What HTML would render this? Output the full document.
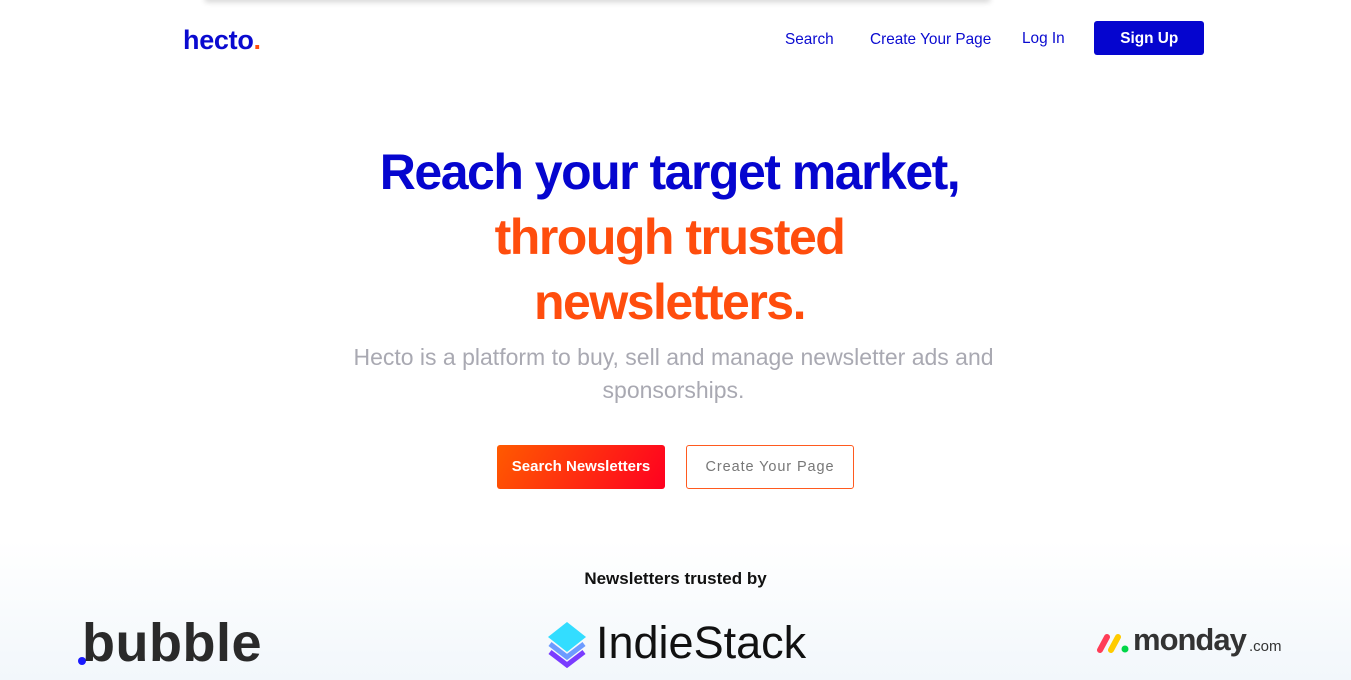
<!DOCTYPE html>
<html><head><meta charset="utf-8">
<style>
*{margin:0;padding:0;box-sizing:border-box}
html,body{width:1351px;height:680px;overflow:hidden;background:#fff;font-family:"Liberation Sans",sans-serif}
.sq{display:inline-block;transform:scaleX(.96);transform-origin:center}
.topshadow{position:absolute;left:205px;top:-6px;width:785px;height:6px;box-shadow:0 2px 6px rgba(0,0,0,.18);background:#fff}
.logo{position:absolute;left:183px;top:25px;font-size:27px;font-weight:bold;color:#0a0ad0;letter-spacing:-0.3px}
.logo span{color:#ff4d0d}
.nav{position:absolute;top:31px;font-size:16px;color:#0a0ad0;white-space:nowrap}
.signup{position:absolute;left:1094px;top:21px;width:110px;height:34px;background:#0505cf;border-radius:3px;color:#fff;font-weight:bold;font-size:16px;text-align:center;line-height:36px}
h1{position:absolute;left:-6px;width:1351px;text-align:center;font-size:50px;font-weight:900;letter-spacing:-1.5px;white-space:nowrap}
.sub{position:absolute;left:-2px;width:1351px;text-align:center;font-size:23px;color:#a9a9b2;line-height:33px;top:341px}
.b1{position:absolute;left:497px;top:445px;width:168px;height:44px;border-radius:3px;background:linear-gradient(120deg,#ff5a00,#ff0020);color:#fff;font-weight:bold;font-size:15px;text-align:center;line-height:44px}
.b2{position:absolute;left:686px;top:445px;width:168px;height:44px;border-radius:3px;border:1px solid #ff5a1f;color:#777;font-size:14.5px;text-align:center;line-height:42px;letter-spacing:.9px}
.bottom{position:absolute;left:0;top:540px;width:1351px;height:140px;background:linear-gradient(#fff,#f2f7fb)}
.trusted{position:absolute;left:0;width:1351px;top:569px;text-align:center;font-weight:bold;font-size:17px;color:#111}
</style></head><body>
<div class="topshadow"></div>
<div class="logo">hecto<span>.</span></div>
<div class="nav" style="left:785px"><span class="sq" style="transform-origin:left">Search</span></div>
<div class="nav" style="left:870px"><span class="sq" style="transform-origin:left">Create Your Page</span></div>
<div class="nav" style="left:1022px;top:30px"><span class="sq" style="transform-origin:left">Log In</span></div>
<div class="signup"><span class="sq">Sign Up</span></div>
<h1 style="top:143px;color:#0505cf">Reach your target market,</h1>
<h1 style="top:208px;color:#ff4d0d">through trusted</h1>
<h1 style="top:273px;color:#ff4d0d">newsletters.</h1>
<div class="sub">Hecto is a platform to buy, sell and manage newsletter ads and<br>sponsorships.</div>
<div class="b1">Search Newsletters</div>
<div class="b2">Create Your Page</div>
<div class="bottom"></div>
<div class="trusted">Newsletters trusted by</div>
<div style="position:absolute;left:78px;top:657px;width:8px;height:8px;border-radius:50%;background:#1a1aff"></div>
<div style="position:absolute;left:82px;top:612px;font-size:54px;color:#2a2a2a;letter-spacing:0.5px;font-weight:bold">bubble</div>
<svg style="position:absolute;left:546px;top:622px" width="42" height="46" viewBox="0 0 42 46">
<polygon points="21,0 40,15 21,30 2,15" fill="#33ddff"/>
<polyline points="4,22 21,35 38,22" fill="none" stroke="#6d9bff" stroke-width="5"/>
<polyline points="4,30 21,43 38,30" fill="none" stroke="#7a3cff" stroke-width="5"/>
</svg>
<div style="position:absolute;left:596px;top:617px;font-size:45px;color:#111;letter-spacing:0px">IndieStack</div>
<svg style="position:absolute;left:1096px;top:632px" width="36" height="22" viewBox="0 0 36 22">
<line x1="4" y1="18" x2="11" y2="5" stroke="#ff3d57" stroke-width="6" stroke-linecap="round"/>
<line x1="15" y1="18" x2="22" y2="5" stroke="#ffcb00" stroke-width="6" stroke-linecap="round"/>
<circle cx="29" cy="17" r="3.5" fill="#00d647"/>
</svg>
<div style="position:absolute;left:1133px;top:622px;font-size:31px;font-weight:bold;color:#333;letter-spacing:-1px">monday</div>
<div style="position:absolute;left:1249px;top:638px;font-size:15px;color:#333">.com</div>
</body></html>
